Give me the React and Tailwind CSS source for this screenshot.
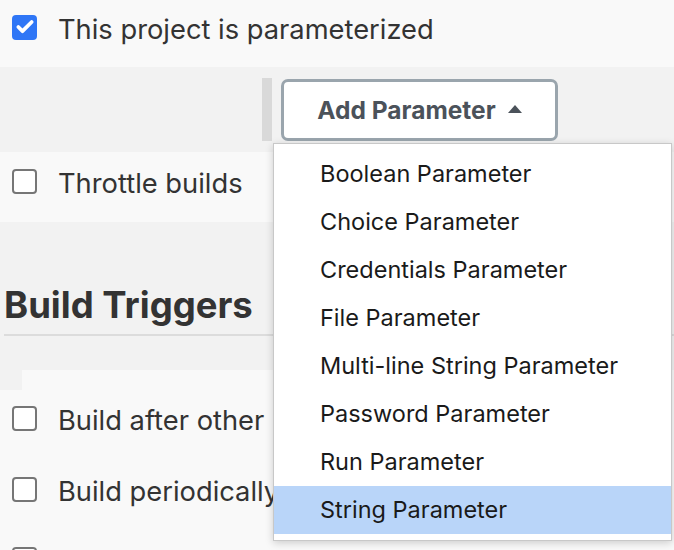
import { Check } from 'lucide-react';

const params = [
  'Boolean Parameter',
  'Choice Parameter',
  'Credentials Parameter',
  'File Parameter',
  'Multi-line String Parameter',
  'Password Parameter',
  'Run Parameter',
  'String Parameter',
];

function Box({ checked }) {
  if (checked) {
    return (
      <span className="w-[25px] h-[25px] rounded-[4px] bg-[#2f76f6] flex items-center justify-center shrink-0">
        <Check size={20} strokeWidth={4.5} className="text-white" />
      </span>
    );
  }
  return <span className="w-[25px] h-[25px] rounded-[4px] border-2 border-[#767676] bg-white shrink-0" />;
}

function Row({ label, checked, className = '' }) {
  return (
    <div className={`flex items-center gap-[21px] pl-3 overflow-hidden ${className}`}>
      <Box checked={checked} />
      {label && <span className="text-[27.3px] leading-[34px] mt-[5px] text-[#333] whitespace-nowrap">{label}</span>}
    </div>
  );
}

export default function App() {
  return (
    <div
      className="relative w-[674px] h-[550px] overflow-hidden bg-[#f2f2f2]"
      style={{ fontFamily: 'Inter, "Liberation Sans", sans-serif' }}
    >
      <Row label="This project is parameterized" checked className="h-[67px] pb-[13px] bg-[#f9f9f9]" />

      <div className="h-[85px] flex items-start pl-[262px] pt-[11px]">
        <div className="w-[10px] h-[63px] bg-[#d9d9d9]" />
        <button className="ml-[9px] mt-[1px] w-[277px] h-[62px] rounded-[7px] border-[3px] border-[#9aa5ad] bg-white flex items-center justify-center gap-[12px] text-[24.5px] font-bold text-[#4b525a]">
          Add Parameter
          <svg width="14" height="8" viewBox="0 0 14 8" className="mt-[-2px]">
            <path d="M7 0 L14 8 L0 8 Z" fill="#4b525a" />
          </svg>
        </button>
      </div>

      <Row label="Throttle builds" className="h-[70px] pb-[11px] bg-[#f9f9f9]" />

      <div className="pt-[61px] pl-1">
        <h2 className="text-[36.5px] font-bold text-[#333] leading-[44px]">Build Triggers</h2>
        <div className="mt-[7px] h-[2px] bg-[#dcdcdc]" />
      </div>

      <div className="mt-[34px] ml-[22px] h-[20px] bg-[#f9f9f9]" />
      <div className="bg-[#f9f9f9] h-[200px]">
        <Row label="Build after other projects are built" className="w-[273px] h-[57px]" />
        <Row label="Build periodically" className="w-[273px] h-[70px] mt-[7px]" />
        <Row className="w-[273px] h-[70px]" />
      </div>

      <div className="absolute left-[273px] top-[143px] w-[399px] h-[398px] bg-white border border-[#c8c8c8] shadow-[0_2px_8px_rgba(0,0,0,0.18)] py-[6px]">
        {params.map((p) => (
          <div
            key={p}
            className={`h-[48px] flex items-center pl-[46px] text-[23.5px] text-[#1a1a1a] ${
              p === 'String Parameter' ? 'bg-[#b9d5f9]' : ''
            }`}
          >
            {p}
          </div>
        ))}
      </div>
    </div>
  );
}
